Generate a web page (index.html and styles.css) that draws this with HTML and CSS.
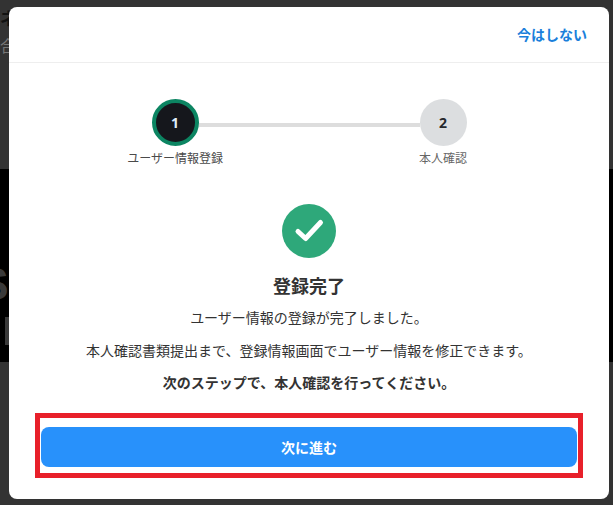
FILE: index.html
```html
<!DOCTYPE html>
<html lang="ja">
<head>
<meta charset="utf-8">
<title>登録完了</title>
<link rel="stylesheet" href="styles.css">
</head>
<body>
<div class="backdrop">
  <div class="bg-top"><span class="bg-logo">ネ</span><span class="bg-sub">合</span></div>
  <div class="bg-band"><span class="bg-s">S</span><span class="bg-i"></span></div>
</div>
<div class="modal">
  <header class="modal-head"><a class="skip">今はしない</a></header>
  <section class="stepper">
    <div class="step">
      <div class="dot dot-active">1</div>
      <div class="step-label">ユーザー情報登録</div>
    </div>
    <div class="step-line"></div>
    <div class="step">
      <div class="dot dot-next">2</div>
      <div class="step-label step-label-muted">本人確認</div>
    </div>
  </section>
  <section class="result">
    <svg class="check" viewBox="0 0 54 54" width="54" height="54" aria-hidden="true">
      <circle cx="27" cy="27" r="27" fill="#2ea87a"/>
      <path d="M16 27.5l7.6 7L38.5 18.5" fill="none" stroke="#fff" stroke-width="5" stroke-linecap="round" stroke-linejoin="round"/>
    </svg>
    <h1 class="title">登録完了</h1>
    <p class="line line-first">ユーザー情報の登録が完了しました。</p>
    <p class="line">本人確認書類提出まで、登録情報画面でユーザー情報を修正できます。</p>
    <p class="line line-bold">次のステップで、本人確認を行ってください。</p>
  </section>
  <div class="cta-frame"><button class="cta">次に進む</button></div>
</div>
</body>
</html>
```
FILE: styles.css
```css
* { box-sizing: border-box; }
html, body { margin: 0; height: 100%; }
body {
  width: 613px;
  height: 505px;
  overflow: hidden;
  position: relative;
  background: #333333;
  font-family: "Noto Sans CJK JP", "Noto Sans", sans-serif;
  color: #333;
}
.backdrop { height: 100%; display: flex; flex-direction: column; }
.bg-top { height: 169px; padding-top: 8px; display: flex; flex-direction: column; font-size: 17px; line-height: 20px; color: #111; }
.bg-sub { color: #777; margin-top: 7px; font-size: 16px; }
.bg-logo { font-weight: 700; }
.bg-band { height: 193px; background: #000; color: #3a3a3a; position: relative; overflow: hidden; }
.bg-s { position: absolute; left: -22px; top: 90px; font: 700 46px/50px "Liberation Sans", sans-serif; }
.bg-i { position: absolute; left: 5px; top: 148px; width: 4px; height: 28px; background: #3a3a3a; }
.modal {
  position: absolute;
  left: 9px;
  top: 7px;
  width: 600px;
  height: 492px;
  background: #fff;
  border-radius: 8px;
  display: flex;
  flex-direction: column;
  align-items: center;
}
.modal-head {
  width: 100%;
  height: 56px;
  flex: none;
  border-bottom: 1px solid #eeeeee;
  display: flex;
  justify-content: flex-end;
  align-items: center;
  padding: 0 22px 2px 0;
}
.skip { font-size: 14px; font-weight: 700; color: #1a7fdb; line-height: 20px; }
.stepper {
  margin-top: 36px;
  width: 315px;
  display: flex;
  align-items: flex-start;
  justify-content: center;
  flex: none;
}
.step { width: 47px; flex: none; display: flex; flex-direction: column; align-items: center; }
.dot {
  width: 47px;
  height: 47px;
  border-radius: 50%;
  display: flex;
  align-items: center;
  justify-content: center;
  font-size: 14px;
  font-weight: 700;
  font-family: "Open Sans", sans-serif;
}
.dot-active { background: #15171c; border: 4px solid #0c8562; color: #dfeefa; }
.dot-next { background: #dcdee0; color: #26282c; }
.step-line { flex: 1; height: 4px; margin-top: 24px; background: #dddddd; }
.step-label { margin-top: 4px; font-size: 12px; line-height: 16px; white-space: nowrap; color: #4a4a4a; }
.step-label-muted { color: #666; }
.result { margin-top: 38px; display: flex; flex-direction: column; align-items: center; flex: none; }
.check { display: block; }
.title { margin: 14px 0 0; font-size: 18px; line-height: 26px; font-weight: 700; color: #333; }
.line { margin: 13px 0 0; font-size: 14px; line-height: 20px; color: #333; font-weight: 400; }
.line-first { margin-top: 9px; }
.line-bold { font-weight: 700; margin-top: 12px; }
.cta-frame {
  margin-top: 21px;
  width: 548px;
  height: 65px;
  border: 5px solid #e8202a;
  padding: 9px 1px 6px;
  flex: none;
}
.cta {
  display: block;
  width: 100%;
  height: 40px;
  border: 0;
  border-radius: 8px;
  background: #2891fb;
  color: #fff;
  font: 700 14px/20px "Noto Sans CJK JP", sans-serif;
}
```
